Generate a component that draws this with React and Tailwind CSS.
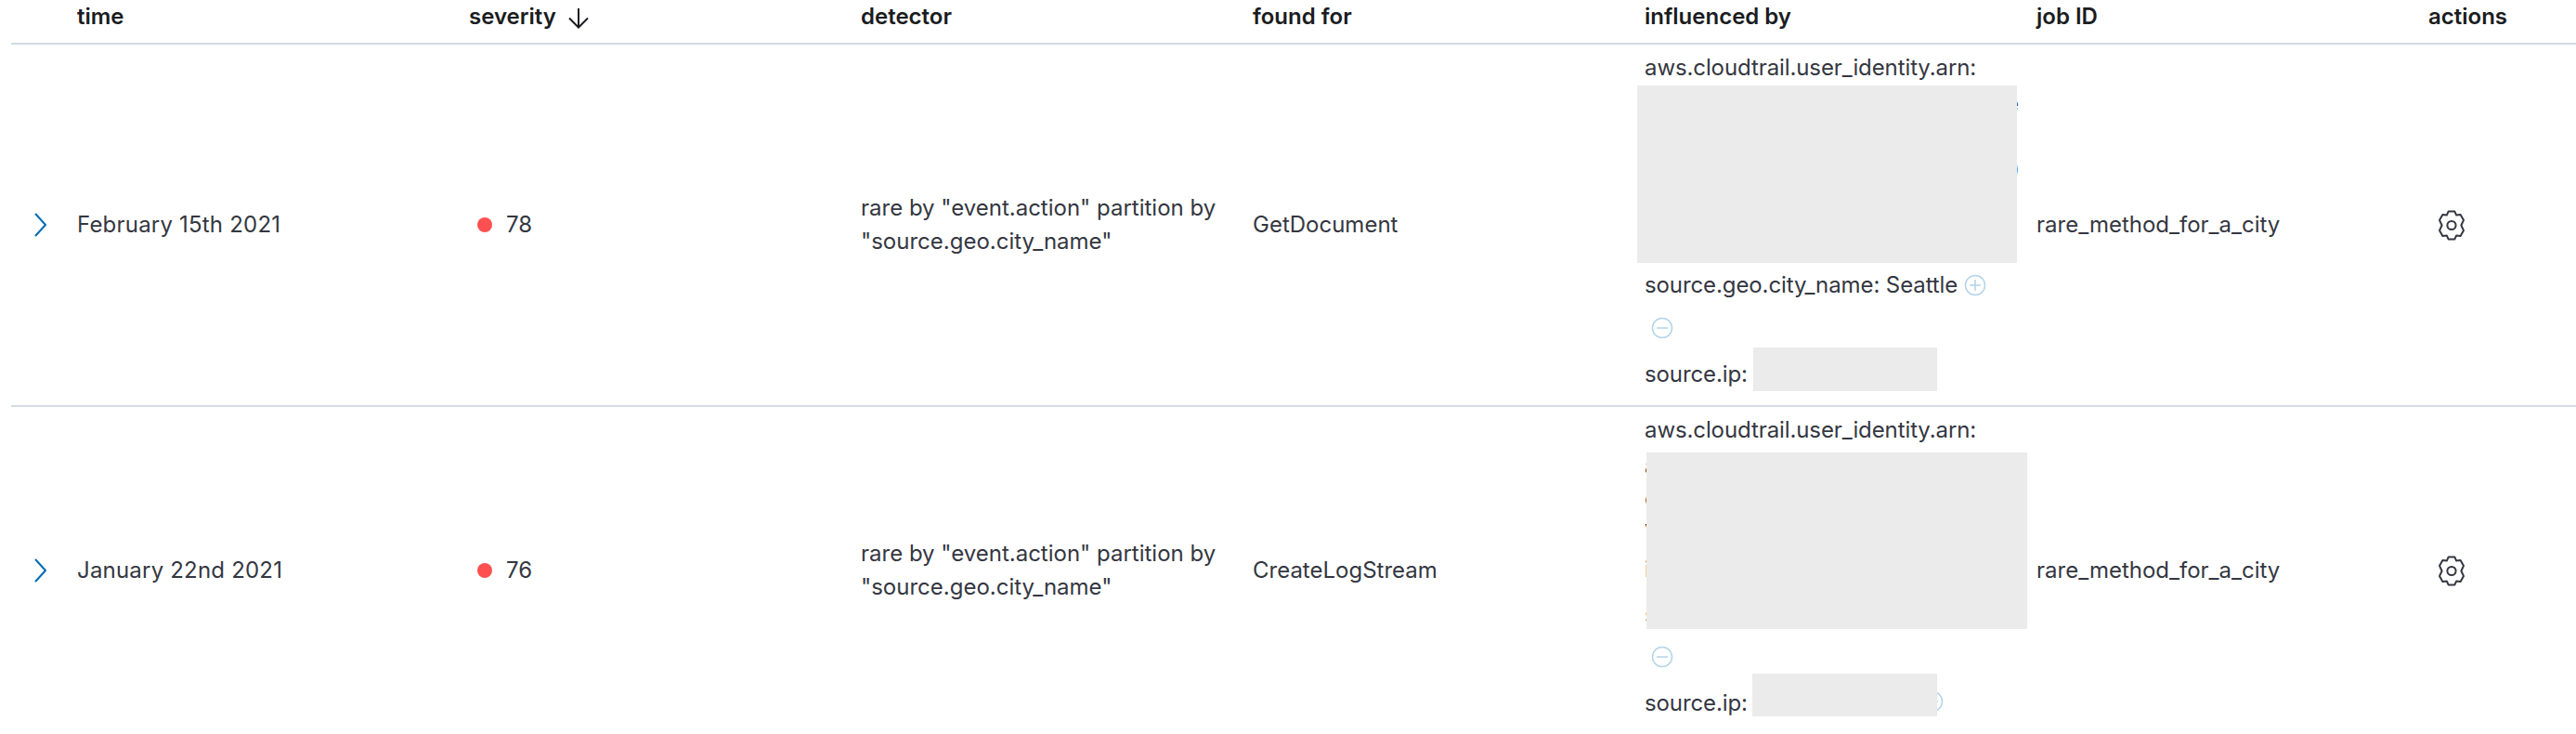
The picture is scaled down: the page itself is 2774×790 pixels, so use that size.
import React from 'react';

const COLUMNS = ['time', 'severity', 'detector', 'found for', 'influenced by', 'job ID', 'actions'];

const ROW_GRID = 'grid grid-cols-[60px_repeat(6,422px)_1fr] items-center';

const Chevron = () => (
  <svg width="14" height="26" viewBox="0 0 14 26" fill="none" className="ml-[25px]">
    <path d="M1.5 1.5 L12 13 L1.5 24.5" stroke="#006bb4" strokeWidth="2" strokeLinecap="round" strokeLinejoin="round" />
  </svg>
);

const SortArrow = () => (
  <svg width="24" height="23" viewBox="0 0 24 23" fill="none" className="ml-[12px] mt-[2px]">
    <path d="M12 1 V21 M2 11.5 L12 21.5 L22 11.5" stroke="#1a1c21" strokeWidth="2" />
  </svg>
);

const Gear = () => (
  <svg width="32" height="33" viewBox="0 0 32 33" fill="none" className="ml-[9px]">
    <path
      d="M12.6 1.6 H19.4 L21.2 5.6 L25.6 5 L29 10.9 L26.4 16.5 L29 22.1 L25.6 28 L21.2 27.4 L19.4 31.4 H12.6 L10.8 27.4 L6.4 28 L3 22.1 L5.6 16.5 L3 10.9 L6.4 5 L10.8 5.6 Z"
      stroke="#343741"
      strokeWidth="2"
      strokeLinejoin="round"
    />
    <circle cx="16" cy="16.5" r="4.6" stroke="#343741" strokeWidth="2" />
  </svg>
);

const FilterIcon = ({ plus = false, className = '' }) => (
  <svg width="24" height="24" viewBox="0 0 24 24" fill="none" className={`shrink-0 ${className}`}>
    <circle cx="12" cy="12" r="10.5" stroke="#b3d3e9" strokeWidth="1.5" />
    <path d={plus ? 'M6 12 H18 M12 6 V18' : 'M6 12 H18'} stroke="#b3d3e9" strokeWidth="1.5" />
  </svg>
);

const Redacted = ({ className = '' }) => <div className={`bg-[#ebebeb] ${className}`} />;

const Row = ({ time, score, action, influencers, last = false }) => (
  <div className={`${ROW_GRID} ${last ? '' : 'border-b-2 border-[#d3dae6]'}`}>
    <Chevron />
    <div className="px-[11px] tracking-[0.2px]">{time}</div>
    <div className="flex items-center px-[11px]">
      <span className="ml-[9px] h-4 w-4 rounded-full bg-[#fe5050]" />
      <span className="ml-[15px]">{score}</span>
    </div>
    <div className="px-[11px]">rare by "event.action" partition by "source.geo.city_name"</div>
    <div className="px-[11px]">{action}</div>
    {influencers}
    <div className="px-[11px]">rare_method_for_a_city</div>
    <div className="px-[11px]">
      <Gear />
    </div>
  </div>
);

const FirstInfluencers = () => (
  <div className="px-[11px] pt-[7px] pb-[15px] tracking-[-0.1px]">
    <div>aws.cloudtrail.user_identity.arn:</div>
    {/* value is blacked out, only the line ends show past the box */}
    <div className="relative h-[198px] pt-[3px] text-right -mr-[2px]">
      <div className="h-9 -mr-px">e</div>
      <div className="mt-[34px] h-9 -mr-[2px]">)</div>
      <Redacted className="absolute -left-[8px] top-px h-[191px] w-[409px]" />
    </div>
    <div className="flex h-9 items-center">
      source.geo.city_name: Seattle
      <FilterIcon plus className="ml-[7px]" />
    </div>
    <div className="mt-[10px] flex h-9 items-center">
      <FilterIcon className="ml-[7px]" />
    </div>
    <div className="mt-[14px] flex h-9 items-end">
      source.ip:
      <Redacted className="ml-[6px] h-[47px] w-[198px]" />
    </div>
  </div>
);

const SecondInfluencers = () => (
  <div className="px-[11px] pt-[7px] pb-[15px] tracking-[-0.1px]">
    <div>aws.cloudtrail.user_identity.arn:</div>
    <div className="relative h-[208px] pt-[3px]">
      <div className="h-9">a</div>
      <div className="-mt-px h-9">c</div>
      <div className="-mt-1 h-9">v</div>
      <div className="mt-2 h-9">i</div>
      <div className="mt-[13px] h-9">s</div>
      <Redacted className="absolute left-[2px] top-[6px] h-[190px] w-[410px]" />
    </div>
    <div className="flex h-9 items-center">
      <FilterIcon className="ml-[7px]" />
    </div>
    <div className="mt-[14px] flex h-9 items-end">
      source.ip:
      <Redacted className="relative z-10 mb-1 ml-[5px] h-[46px] w-[199px]" />
      <FilterIcon plus className="mb-2 -ml-[17px]" />
    </div>
  </div>
);

export default function App() {
  return (
    <div className="h-[790px] overflow-hidden bg-white pl-3 font-['Inter',sans-serif] text-[24px] leading-9 text-[#343741]">
      {/* Header */}
      <div className={`${ROW_GRID} h-12 border-b-2 border-[#d3dae6] pb-[10px] font-semibold text-[#1a1c21]`}>
        <div />
        {COLUMNS.map((name) => (
          <div key={name} className="flex items-center px-[11px]">
            {name}
            {name === 'severity' && <SortArrow />}
          </div>
        ))}
      </div>

      <Row time="February 15th 2021" score="78" action="GetDocument" influencers={<FirstInfluencers />} />
      <Row time="January 22nd 2021" score="76" action="CreateLogStream" influencers={<SecondInfluencers />} last />
    </div>
  );
}
